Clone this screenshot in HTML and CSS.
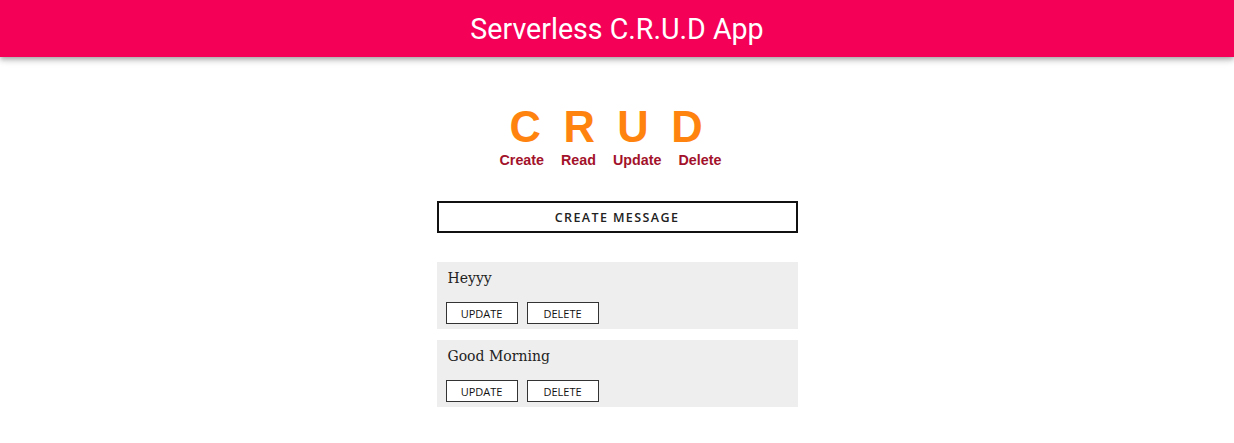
FILE: index.html
```html
<!DOCTYPE html>
<html>
<head>
<meta charset="utf-8">
<title>Serverless C.R.U.D App</title>
<link rel="stylesheet" href="styles.css">
</head>
<body>
<header class="appbar">
  <h1 class="appbar-title">Serverless C.R.U.D App</h1>
</header>
<main class="content">
  <div class="crud-logo">
    <div class="crud-letters">
      <span>C</span><span>R</span><span>U</span><span>D</span>
    </div>
    <div class="crud-labels">
      <span>Create</span><span>Read</span><span>Update</span><span>Delete</span>
    </div>
  </div>
  <button class="create-btn">CREATE MESSAGE</button>
  <div class="messages">
    <div class="message-card">
      <div class="message-text">Heyyy</div>
      <div class="message-actions">
        <button class="small-btn">UPDATE</button>
        <button class="small-btn">DELETE</button>
      </div>
    </div>
    <div class="message-card">
      <div class="message-text">Good Morning</div>
      <div class="message-actions">
        <button class="small-btn">UPDATE</button>
        <button class="small-btn">DELETE</button>
      </div>
    </div>
  </div>
</main>
</body>
</html>
```

FILE: styles.css
```css
* { box-sizing: border-box; }
html, body { margin: 0; padding: 0; background: #ffffff; }
body { font-family: "Roboto", "Liberation Sans", sans-serif; }

.appbar {
  height: 57px;
  background: #f50057;
  display: flex;
  align-items: center;
  justify-content: center;
  box-shadow: 0 2px 4px -1px rgba(0,0,0,0.2), 0 4px 5px 0 rgba(0,0,0,0.14), 0 1px 10px 0 rgba(0,0,0,0.12);
}
.appbar-title {
  margin: 0;
  color: #ffffff;
  font-family: "Roboto", sans-serif;
  font-weight: 400;
  font-size: 28.6px;
  line-height: 32px;
}

.content {
  width: 361px;
  margin: 0 auto;
  display: flex;
  flex-direction: column;
}

.crud-logo {
  margin-top: 47px;
  padding-left: 63px;
  display: flex;
  flex-direction: column;
  font-family: "Liberation Sans", Arial, sans-serif;
  font-weight: 700;
}
.crud-letters {
  display: flex;
  gap: 22.5px;
  padding-left: 10px;
  font-size: 43.5px;
  line-height: 46px;
  color: #ff840f;
}
.crud-labels {
  display: flex;
  gap: 17px;
  margin-top: 2px;
  font-size: 14.3px;
  line-height: 16px;
  color: #a3122b;
}

.create-btn {
  margin-top: 33px;
  height: 32px;
  width: 361px;
  background: #ffffff;
  border: 2px solid #111111;
  font-family: "Open Sans", sans-serif;
  font-weight: 600;
  font-size: 12.5px;
  letter-spacing: 1.4px;
  color: #222222;
  padding: 0;
}

.messages {
  margin-top: 29px;
  display: flex;
  flex-direction: column;
  gap: 11px;
}
.message-card {
  background: #eeeeee;
  height: 67px;
  padding: 6px 9px 5px 9px;
  display: flex;
  flex-direction: column;
  justify-content: space-between;
}
.message-text {
  padding-left: 2px;
  font-family: "DejaVu Serif", serif;
  font-size: 14px;
  line-height: 20px;
  color: #222222;
}
.message-actions {
  display: flex;
  gap: 9px;
}
.small-btn {
  width: 72px;
  height: 22px;
  padding: 0;
  background: #ffffff;
  border: 1px solid #333333;
  font-family: "Open Sans", sans-serif;
  font-weight: 400;
  font-size: 11px;
  color: #111111;
}
```
